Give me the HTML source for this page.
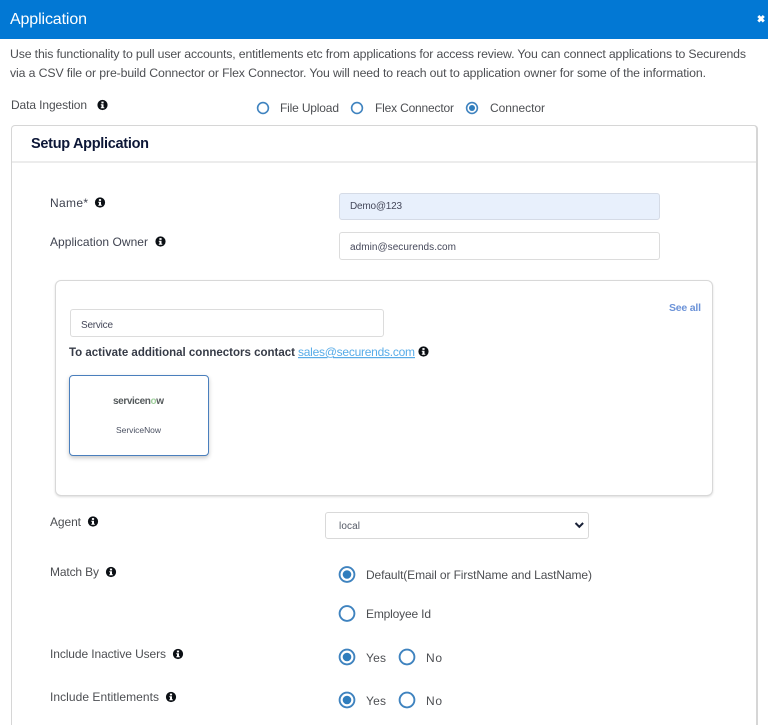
<!DOCTYPE html>
<html lang="en">
<head>
<meta charset="utf-8">
<title>Application</title>
<style>
html,body{margin:0;padding:0;background:#fff;overflow:hidden}
#page{position:relative;width:768px;height:725px;overflow:hidden;background:#fff;font-family:"Liberation Sans","DejaVu Sans",sans-serif}
.b{position:absolute;box-sizing:border-box;background:#fff;border:1px solid #dcdcdc;border-radius:3px}
#head{position:absolute;left:0;top:0;width:768px;height:39px;background:#0278d4}
svg{position:absolute;left:0;top:0;display:block;filter:blur(.3px)}
text{font-family:"Liberation Sans","DejaVu Sans",sans-serif;font-size:12px;fill:#4d4f53}
.d{fill:#3f4350}
.s{font-size:10px;fill:#45485a}
.r{fill:none;stroke:#3f83bf;stroke-width:1.6}
.r2{fill:none;stroke:#3f83bf;stroke-width:1.9}
.dot{fill:#2f7dbd}
</style>
</head>
<body>
<div id="page">
  <div id="head"></div>
  <div class="b" style="left:11px;top:125px;width:747px;height:600px;border-color:#d6d6d6;border-width:1px 2px 0 1px;border-radius:4px 4px 0 0"></div>
  <div style="position:absolute;left:12px;top:161px;width:744px;height:2px;background:#ececec"></div>
  <div class="b" style="left:339px;top:193px;width:321px;height:27px;background:#e8f0fc;border-color:#d5dbe6"></div>
  <div class="b" style="left:339px;top:232px;width:321px;height:28px"></div>
  <div class="b" style="left:55px;top:280px;width:658px;height:216px;border-radius:6px;border-color:#d8d8d8;box-shadow:0 1px 2px rgba(0,0,0,.14)"></div>
  <div class="b" style="left:70px;top:309px;width:314px;height:28px"></div>
  <div class="b" style="left:69px;top:375px;width:140px;height:81px;border:1.3px solid #4a7fbd;border-radius:4px;box-shadow:0 2px 4px rgba(0,0,0,.22)"></div>
  <div class="b" style="left:325px;top:512px;width:264px;height:27px;border-color:#d9d9d9"></div>

  <svg width="768" height="725" viewBox="0 0 768 725">
    <defs>
      <g id="info">
        <circle cx="0" cy="0" r="5.1" fill="#0b0f14"/>
        <rect x="-1.1" y="-3.4" width="2.2" height="1.8" fill="#fff"/>
        <path d="M-1.7-.8H1V2.2H1.8V3.2H-1.7V2.2H-1V.2H-1.7Z" fill="#fff"/>
      </g>
    </defs>

    <text x="10" y="24" textLength="77" style="font-size:16px;fill:#fff">Application</text>
    <path d="M758.3 16L763.8 21.500M763.8 16L758.3 21.500" stroke="#fff" stroke-width="2.8" fill="none"/>

    <text x="10" y="58" textLength="736" style="font-size:12.3px">Use this functionality to pull user accounts, entitlements etc from applications for access review. You can connect applications to Securends</text>
    <text x="10" y="77" textLength="696" style="font-size:12.3px">via a CSV file or pre-build Connector or Flex Connector. You will need to reach out to application owner for some of the information.</text>

    <text x="11" y="109" textLength="76">Data Ingestion</text>
    <use href="#info" x="102.500" y="105"/>

    <circle class="r" cx="263" cy="108" r="5.4"/>
    <text x="280" y="112" textLength="59">File Upload</text>
    <circle class="r" cx="357" cy="108" r="5.4"/>
    <text x="375" y="112" textLength="79">Flex Connector</text>
    <circle class="r" cx="472" cy="108" r="5.4"/>
    <circle class="dot" cx="472" cy="108" r="3"/>
    <text x="490" y="112" textLength="55">Connector</text>

    <text x="31" y="148" textLength="118" style="font-size:14.5px;font-weight:700;fill:#0d1737">Setup Application</text>

    <text x="50" y="207" textLength="38" class="d">Name*</text>
    <use href="#info" x="100" y="202.500"/>
    <text x="350" y="209" textLength="52" class="s">Demo@123</text>

    <text x="50" y="246" textLength="98" class="d">Application Owner</text>
    <use href="#info" x="160.500" y="241.500"/>
    <text x="350" y="250" textLength="106" class="s">admin@securends.com</text>

    <text x="669" y="311" textLength="32" style="font-size:10.5px;font-weight:700;fill:#6c93d8">See all</text>

    <text x="81" y="328" textLength="32" class="s">Service</text>
    <text x="69" y="356" textLength="226" style="font-weight:700;font-size:11.5px;fill:#363b47">To activate additional connectors contact</text>
    <text x="298" y="356" textLength="117" style="fill:#58ace8;text-decoration:underline">sales@securends.com</text>
    <use href="#info" x="423.500" y="351.500"/>

    <text x="113" y="404" textLength="51" style="font-size:10px;font-weight:700;fill:#555a5c">servicen<tspan fill="#9fcf9c">o</tspan>w</text>
    <text x="116" y="433" textLength="45" style="font-size:8.5px;fill:#4b5162">ServiceNow</text>

    <text x="50" y="526" textLength="31">Agent</text>
    <use href="#info" x="93" y="521.500"/>
    <text x="339" y="529" textLength="21" class="s" style="fill:#555a66">local</text>
    <path d="M575.500 523L579.300 526.800L583.100 523" fill="none" stroke="#1a2238" stroke-width="2"/>

    <text x="50" y="576" textLength="49">Match By</text>
    <use href="#info" x="111" y="572"/>
    <circle class="r2" cx="347" cy="574.500" r="7.400"/>
    <circle class="dot" cx="347" cy="574.500" r="4.300"/>
    <text x="366" y="579" textLength="226">Default(Email or FirstName and LastName)</text>
    <circle class="r2" cx="347" cy="613.500" r="7.400"/>
    <text x="366" y="618" textLength="65">Employee Id</text>

    <text x="50" y="658" textLength="116">Include Inactive Users</text>
    <use href="#info" x="178" y="654"/>
    <circle class="r2" cx="347" cy="657" r="7.400"/>
    <circle class="dot" cx="347" cy="657" r="4.300"/>
    <text x="366" y="662" textLength="20">Yes</text>
    <circle class="r2" cx="407" cy="657" r="7.400"/>
    <text x="426" y="662" textLength="16">No</text>

    <text x="50" y="701" textLength="109">Include Entitlements</text>
    <use href="#info" x="171" y="697"/>
    <circle class="r2" cx="347" cy="700" r="7.400"/>
    <circle class="dot" cx="347" cy="700" r="4.300"/>
    <text x="366" y="705" textLength="20">Yes</text>
    <circle class="r2" cx="407" cy="700" r="7.400"/>
    <text x="426" y="705" textLength="16">No</text>
  </svg>
</div>
</body>
</html>
